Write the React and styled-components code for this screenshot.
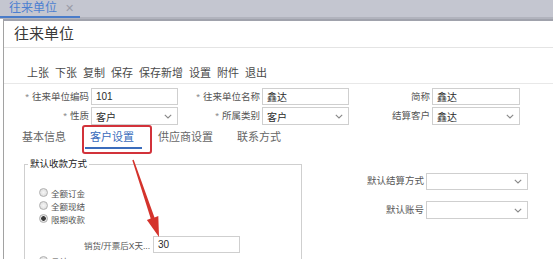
import React from 'react';
import styled, { createGlobalStyle, css } from 'styled-components';

const GlobalStyle = createGlobalStyle`
  html, body {
    margin: 0;
    padding: 0;
    background: #fff;
  }
  body {
    font-family: "Liberation Sans", "Noto Sans CJK SC", sans-serif;
    color: #333;
  }
`;

const Page = styled.div`
  position: relative;
  width: 553px;
  height: 259px;
  overflow: hidden;
  background: #fff;
`;

const TopBar = styled.div`
  display: flex;
  align-items: flex-end;
  height: 17px;
  background: #c4c6d0;
  border-bottom: 2px solid #b1b3bd;
`;

const DocTab = styled.div`
  position: relative;
  display: flex;
  align-items: center;
  box-sizing: border-box;
  width: 80px;
  height: 18px;
  margin-bottom: -1px;
  padding-left: 9px;
  border-bottom: 2px solid #4a7cc9;
  font-size: 12px;
  line-height: 16px;
  color: #4c7fd0;
`;

const CloseMark = styled.span`
  margin-left: 8px;
  font-size: 11px;
  color: #9a9ca8;
`;

const Window = styled.div`
  margin-left: 3px;
  height: 238px;
  border-left: 1px solid #a2a2a2;
  border-top: 2px solid #a0a2ac;
`;

const Title = styled.div`
  height: 26px;
  line-height: 26px;
  padding-left: 10px;
  font-size: 15px;
  color: #3a3a3a;
  border-bottom: 1px solid #e4e4e4;
`;

const Toolbar = styled.div`
  display: flex;
  gap: 6px;
  height: 20px;
  margin-top: 15px;
  padding-left: 23px;
  line-height: 20px;
  font-size: 11px;
  color: #4a4a4a;
  border-bottom: 1px solid #e8e8e8;
`;

const FormGrid = styled.div`
  display: grid;
  grid-template-columns: 85px 87px 80px 87px 79px 88px;
  grid-auto-rows: 18px;
  column-gap: 2px;
  row-gap: 1px;
  padding-top: 4px;
`;

const Label = styled.div`
  font-size: 9.5px;
  line-height: 18px;
  color: #555;
  text-align: right;
  white-space: nowrap;
`;

const Star = styled.span`
  margin-right: 3px;
  color: #888;
`;

const Field = styled.div`
  display: flex;
  align-items: center;
  justify-content: space-between;
  box-sizing: border-box;
  height: ${(p) => p.$h || 18}px;
  padding: 0 5px 0 4px;
  border: 1px solid #cfcfcf;
  background: #fff;
  font-size: 10px;
  color: #2a2a2a;
  white-space: nowrap;
`;

const Chevron = () => (
  <svg width="8" height="5" viewBox="0 0 8 5">
    <polyline points="0.8,0.8 4,4 7.2,0.8" fill="none" stroke="#888" strokeWidth="1.1" />
  </svg>
);

const Tabs = styled.div`
  display: flex;
  gap: 24px;
  height: 24px;
  padding-left: 18px;
`;

const TabItem = styled.div`
  position: relative;
  box-sizing: border-box;
  height: 24px;
  padding-top: 5px;
  line-height: 14px;
  font-size: 11px;
  color: #666;
  white-space: nowrap;
  ${(p) =>
    p.$active &&
    css`
      color: #3a6cbc;
      &::after {
        content: '';
        position: absolute;
        left: -5px;
        right: -8px;
        bottom: 0;
        height: 2px;
        background: #3a6cbc;
      }
      &::before {
        content: '';
        position: absolute;
        left: -8px;
        top: 0;
        width: 70px;
        height: 29px;
        box-sizing: border-box;
        border: 2px solid #d2323a;
        border-radius: 3px;
      }
    `}
`;

const Content = styled.div`
  display: flex;
  align-items: flex-start;
  padding-left: 20px;
`;

const GroupBox = styled.fieldset`
  box-sizing: border-box;
  width: 278px;
  height: 130px;
  margin: 9px 0 0 0;
  padding: 0 0 0 14px;
  border: 1px solid #cfcfcf;
`;

const Legend = styled.legend`
  margin-left: -11px;
  padding: 0 2px;
  font-size: 9.5px;
  line-height: 12px;
  color: #222;
`;

const RadioList = styled.div`
  display: flex;
  flex-direction: column;
  padding-top: 16px;
`;

const RadioRow = styled.div`
  display: flex;
  align-items: center;
  gap: 3px;
  height: 13px;
  margin-top: ${(p) => p.$mt || 0}px;
  font-size: 8.5px;
  color: #555;
`;

const RadioDot = styled.span`
  box-sizing: border-box;
  width: 9px;
  height: 9px;
  border-radius: 50%;
  border: 1px solid #b0b0b0;
  background: ${(p) =>
    p.$checked
      ? 'radial-gradient(circle, #3a3a3a 0 2px, #e6e6e6 2.6px)'
      : 'radial-gradient(circle, #f6f6f6 0, #d8d8d8 100%)'};
`;

const DelayRow = styled.div`
  display: flex;
  align-items: center;
  gap: 3px;
  margin-top: 11px;
  padding-left: 39px;
`;

const DelayLabel = styled.div`
  width: 72px;
  font-size: 8.5px;
  color: #555;
  text-align: right;
  white-space: nowrap;
`;

const SidePanel = styled.div`
  display: grid;
  grid-template-columns: auto 102px;
  column-gap: 2px;
  row-gap: 11px;
  align-items: center;
  margin: 23px 25px 0 auto;
`;

const Arrow = styled.svg`
  position: absolute;
  left: 0;
  top: 0;
  pointer-events: none;
`;

const toolbarItems = ['上张', '下张', '复制', '保存', '保存新增', '设置', '附件', '退出'];

export default function App() {
  return (
    <Page>
      <GlobalStyle />
      <TopBar>
        <DocTab>
          往来单位<CloseMark>✕</CloseMark>
        </DocTab>
      </TopBar>
      <Window>
        <Title>往来单位</Title>
        <Toolbar>
          {toolbarItems.map((t) => (
            <span key={t}>{t}</span>
          ))}
        </Toolbar>
        <FormGrid>
          <Label><Star>*</Star>往来单位编码</Label>
          <Field $h={17}>101</Field>
          <Label><Star>*</Star>往来单位名称</Label>
          <Field $h={17}>鑫达</Field>
          <Label>简称</Label>
          <Field $h={17}>鑫达</Field>

          <Label><Star>*</Star>性质</Label>
          <Field>客户<Chevron /></Field>
          <Label><Star>*</Star>所属类别</Label>
          <Field>客户<Chevron /></Field>
          <Label>结算客户</Label>
          <Field>鑫达<Chevron /></Field>
        </FormGrid>
        <Tabs>
          <TabItem>基本信息</TabItem>
          <TabItem $active>客户设置</TabItem>
          <TabItem>供应商设置</TabItem>
          <TabItem>联系方式</TabItem>
        </Tabs>
        <Content>
          <GroupBox>
            <Legend>默认收款方式</Legend>
            <RadioList>
              <RadioRow><RadioDot />全额订金</RadioRow>
              <RadioRow><RadioDot />全额现结</RadioRow>
              <RadioRow><RadioDot $checked />限期收款</RadioRow>
            </RadioList>
            <DelayRow>
              <DelayLabel>销货/开票后X天...</DelayLabel>
              <Field style={{ width: 87 }} $h={17}>30</Field>
            </DelayRow>
            <RadioRow $mt={1}><RadioDot />月结</RadioRow>
          </GroupBox>
          <SidePanel>
            <Label>默认结算方式</Label>
            <Field $h={17}><span /><Chevron /></Field>
            <Label>默认账号</Label>
            <Field><span /><Chevron /></Field>
          </SidePanel>
        </Content>
      </Window>
      <Arrow width="553" height="259" viewBox="0 0 553 259">
        <polygon
          points="132.3,160.2 133.7,159.8 154.5,217.4 158.3,216.1 159,237 146.9,219.9 150.7,218.6"
          fill="#d4332c"
        />
      </Arrow>
    </Page>
  );
}
